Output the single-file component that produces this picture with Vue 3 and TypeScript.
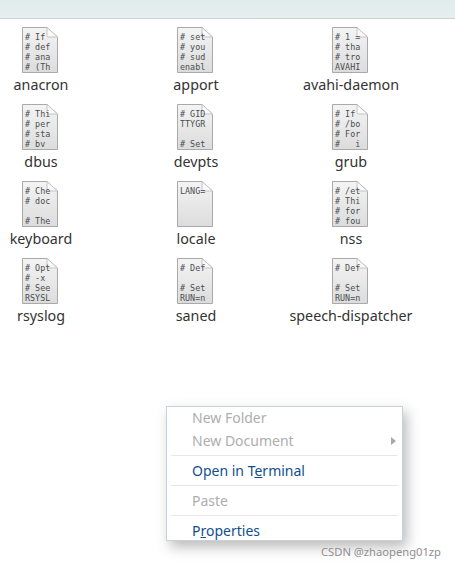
<script setup lang="ts">
interface FileItem { name: string; lines: string[] }
const files: FileItem[] = [
  { name: 'anacron', lines: ['# If', '# def', '# ana', '# (Th'] },
  { name: 'apport', lines: ['# set', '# you', '# sud', 'enabl'] },
  { name: 'avahi-daemon', lines: ['# 1 =', '# tha', '# tro', 'AVAHI'] },
  { name: 'dbus', lines: ['# Thi', '# per', '# sta', '# bv'] },
  { name: 'devpts', lines: ['# GID', 'TTYGR', '', '# Set'] },
  { name: 'grub', lines: ['# If', '# /bo', '# For', '#   i'] },
  { name: 'keyboard', lines: ['# Che', '# doc', '', '# The'] },
  { name: 'locale', lines: ['LANG='] },
  { name: 'nss', lines: ['# /et', '# Thi', '# for', '# fou'] },
  { name: 'rsyslog', lines: ['# Opt', '# -x', '# See', 'RSYSL'] },
  { name: 'saned', lines: ['# Def', '', '# Set', 'RUN=n'] },
  { name: 'speech-dispatcher', lines: ['# Def', '', '# Set', 'RUN=n'] },
]
</script>

<template>
  <div class="page">
    <header class="topbar"></header>
    <main class="grid">
      <div v-for="f in files" :key="f.name" class="file">
        <svg class="icon" width="36" height="46" viewBox="0 0 36 46">
          <defs>
            <linearGradient id="paper" x1="0" y1="0" x2="0" y2="1">
              <stop offset="0" stop-color="#f4f4f4" />
              <stop offset="1" stop-color="#dcdcdc" />
            </linearGradient>
          </defs>
          <path d="M0.5 0.5H25L35.5 10V45.5H0.5Z" fill="url(#paper)" stroke="#a9a9a9" />
          <path d="M25 0.5L35.5 10H26.5Q25 10 25 8.5Z" fill="#fafafa" stroke="#c4c4c4" />
          <text
            v-for="(line, i) in f.lines"
            :key="i"
            class="code"
            x="3"
            :y="12.5 + i * 10"
            xml:space="preserve"
          >{{ line }}</text>
        </svg>
        <span class="label">{{ f.name }}</span>
      </div>
    </main>

    <div class="menu">
      <div class="item off">New Folder</div>
      <div class="item off has-sub">New Document<span class="arrow"></span></div>
      <div class="sep"></div>
      <div class="item on">Open in T<u>e</u>rminal</div>
      <div class="sep"></div>
      <div class="item off">Paste</div>
      <div class="sep"></div>
      <div class="item on">P<u>r</u>operties</div>
    </div>
    <div class="mark">CSDN @zhaopeng01zp</div>
  </div>
</template>

<style scoped>
.page {
  position: relative;
  width: 455px;
  height: 569px;
  overflow: hidden;
  background: #fff;
  font-family: "Noto Sans", "Open Sans", sans-serif;
}
.topbar {
  height: 18px;
  background: linear-gradient(#e0ecec, #e8eeee);
  border-bottom: 1px solid #cdd3d3;
}
.grid {
  display: grid;
  grid-template-columns: repeat(3, 155px);
  grid-auto-rows: 77px;
  margin-left: -38px;
  padding-top: 8px;
}
.file {
  display: flex;
  flex-direction: column;
  align-items: center;
}
.icon {
  display: block;
  flex: none;
}
.code {
  font-family: "DejaVu Sans Mono", monospace;
  font-size: 8.4px;
  fill: #4a4e52;
  white-space: pre;
}
.label {
  margin-top: 2px;
  padding-left: 3px;
  font-size: 14.3px;
  line-height: 20px;
  color: #333;
  white-space: nowrap;
}
.menu {
  position: absolute;
  left: 166px;
  top: 406px;
  width: 237px;
  height: 135px;
  box-sizing: border-box;
  background: #fff;
  border: 1px solid #c6d2dc;
  box-shadow: 4px 6px 12px rgba(60, 60, 60, 0.35);
  font-size: 14px;
}
.item {
  height: 23px;
  line-height: 21px;
  padding-left: 25px;
  position: relative;
}
.off { color: #aeaeae; }
.on { color: #0f4f8f; }
.sep {
  height: 1px;
  background: #e6e8e8;
  margin: 2px 4px 4px;
}
.arrow {
  position: absolute;
  right: 6px;
  top: 7px;
  width: 0;
  height: 0;
  border-left: 5px solid #a8a8a8;
  border-top: 4px solid transparent;
  border-bottom: 4px solid transparent;
}
.mark {
  position: absolute;
  left: 321px;
  top: 544px;
  font-size: 11.2px;
  line-height: 16px;
  color: #8f8f8f;
  white-space: nowrap;
}
</style>
